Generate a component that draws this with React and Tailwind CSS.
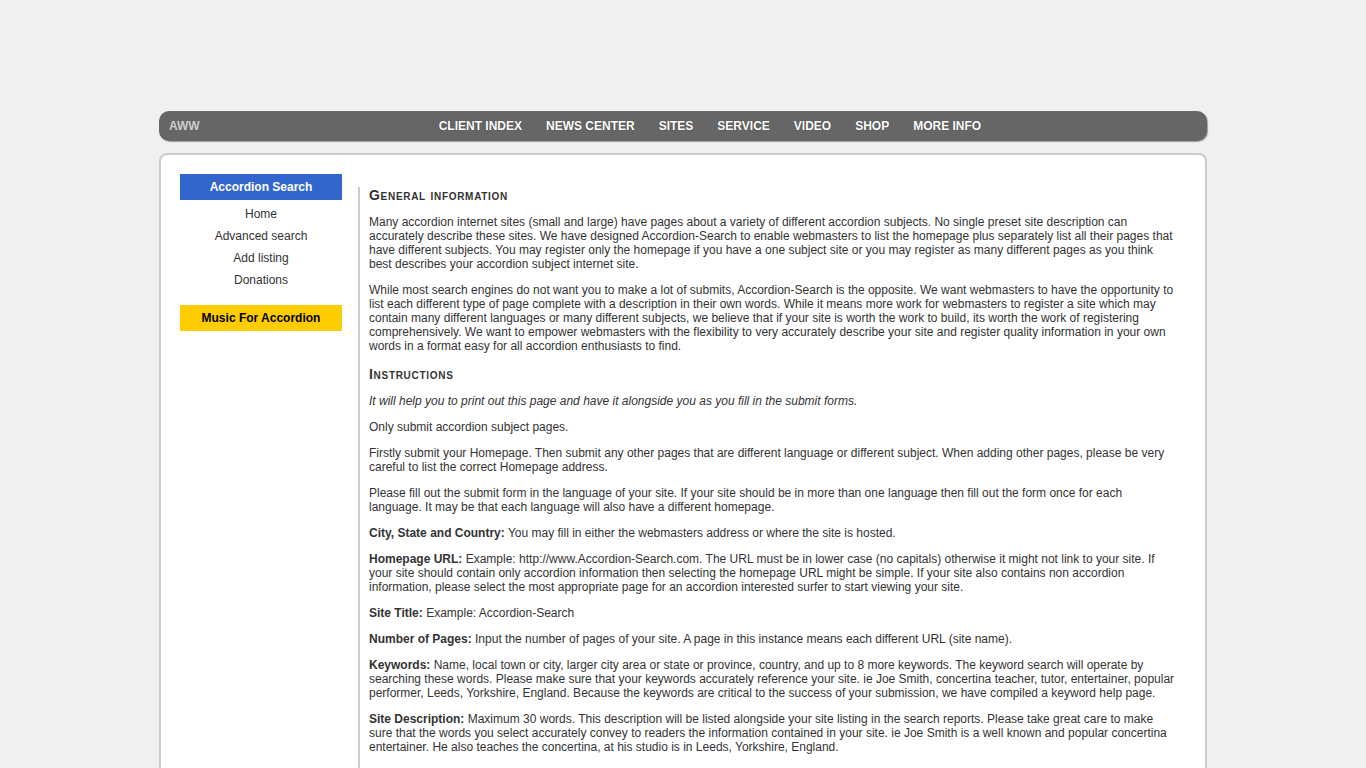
import React from "react";

const navItems = ["CLIENT INDEX", "NEWS CENTER", "SITES", "SERVICE", "VIDEO", "SHOP", "MORE INFO"];
const sideLinks = ["Home", "Advanced search", "Add listing", "Donations"];

function Heading({ children, first }) {
  return (
    <h2 className={`${first ? "" : "mt-[14px]"} mb-[13px] text-[14px] font-bold leading-[14px] tracking-[0.7px] text-[#333] [font-variant:small-caps]`}>
      {children}
    </h2>
  );
}

function P({ children, className = "" }) {
  return <p className={`mb-[12px] text-[12px] leading-[14px] text-[#333] ${className}`}>{children}</p>;
}

export default function App() {
  return (
    <div className="min-h-screen bg-[#f0f0f0] pt-[111px] font-['Liberation_Sans',Arial,sans-serif]">
      <div className="mx-auto w-[1048px]">
        <nav className="flex h-[30px] items-center rounded-[10px] bg-[#666] px-[10px] shadow-[1px_1px_1px_rgba(0,0,0,0.35)]">
          <span className="text-[12px] font-bold text-[#ccc]">AWW</span>
          <ul className="ml-[239px] flex gap-[24px]">
            {navItems.map((item) => (
              <li key={item} className="text-[12px] font-bold text-white [text-shadow:0_0_1px_rgba(0,0,0,0.5)]">
                {item}
              </li>
            ))}
          </ul>
        </nav>

        <main className="mt-[12px] flex rounded-t-[8px] border-2 border-[#ccc] bg-white pl-[19px] pr-[29px] pt-[19px] pb-10">
          <aside className="w-[162px] shrink-0">
            <div className="flex h-[26px] items-center justify-center bg-[#3366cc] text-[12px] font-bold text-white">Accordion Search</div>
            <ul className="mt-[3px]">
              {sideLinks.map((link) => (
                <li key={link} className="h-[22px] text-center text-[12px] leading-[22px] text-[#333]">{link}</li>
              ))}
            </ul>
            <div className="mt-[14px] flex h-[26px] items-center justify-center bg-[#ffcc00] text-[12px] font-bold text-black">Music For Accordion</div>
          </aside>

          <section className="ml-[16px] mt-[13px] flex-1 border-l-2 border-[#ccc] pl-[9px] pt-px">
            <Heading first>General information</Heading>
            <P>
              Many accordion internet sites (small and large) have pages about a variety of different accordion subjects. No single preset site description can accurately describe these sites. We have designed Accordion-Search to enable webmasters to list the homepage plus separately list all their pages that have different subjects. You may register only the homepage if you have a one subject site or you may register as many different pages as you think best describes your accordion subject internet site.
            </P>
            <P>
              While most search engines do not want you to make a lot of submits, Accordion-Search is the opposite. We want webmasters to have the opportunity to list each different type of page complete with a description in their own words. While it means more work for webmasters to register a site which may contain many different languages or many different subjects, we believe that if your site is worth the work to build, its worth the work of registering comprehensively. We want to empower webmasters with the flexibility to very accurately describe your site and register quality information in your own words in a format easy for all accordion enthusiasts to find.
            </P>
            <Heading>Instructions</Heading>
            <P className="italic">It will help you to print out this page and have it alongside you as you fill in the submit forms.</P>
            <P>Only submit accordion subject pages.</P>
            <P>
              Firstly submit your Homepage. Then submit any other pages that are different language or different subject. When adding other pages, please be very careful to list the correct Homepage address.
            </P>
            <P>
              Please fill out the submit form in the language of your site. If your site should be in more than one language then fill out the form once for each language. It may be that each language will also have a different homepage.
            </P>
            <P>
              <b>City, State and Country:</b> You may fill in either the webmasters address or where the site is hosted.
            </P>
            <P>
              <b>Homepage URL:</b> Example: http://www.Accordion-Search.com. The URL must be in lower case (no capitals) otherwise it might not link to your site. If your site should contain only accordion information then selecting the homepage URL might be simple. If your site also contains non accordion information, please select the most appropriate page for an accordion interested surfer to start viewing your site.
            </P>
            <P>
              <b>Site Title:</b> Example: Accordion-Search
            </P>
            <P>
              <b>Number of Pages:</b> Input the number of pages of your site. A page in this instance means each different URL (site name).
            </P>
            <P>
              <b>Keywords:</b> Name, local town or city, larger city area or state or province, country, and up to 8 more keywords. The keyword search will operate by searching these words. Please make sure that your keywords accurately reference your site. ie Joe Smith, concertina teacher, tutor, entertainer, popular performer, Leeds, Yorkshire, England. Because the keywords are critical to the success of your submission, we have compiled a keyword help page.
            </P>
            <P>
              <b>Site Description:</b> Maximum 30 words. This description will be listed alongside your site listing in the search reports. Please take great care to make sure that the words you select accurately convey to readers the information contained in your site. ie Joe Smith is a well known and popular concertina entertainer. He also teaches the concertina, at his studio is in Leeds, Yorkshire, England.
            </P>
            <P className="pt-[14px]">
              <b>E-mail:</b> Your e-mail address will not be displayed. It is used only to confirm your submission and to contact you about your listing.
            </P>
          </section>
        </main>
      </div>
    </div>
  );
}
